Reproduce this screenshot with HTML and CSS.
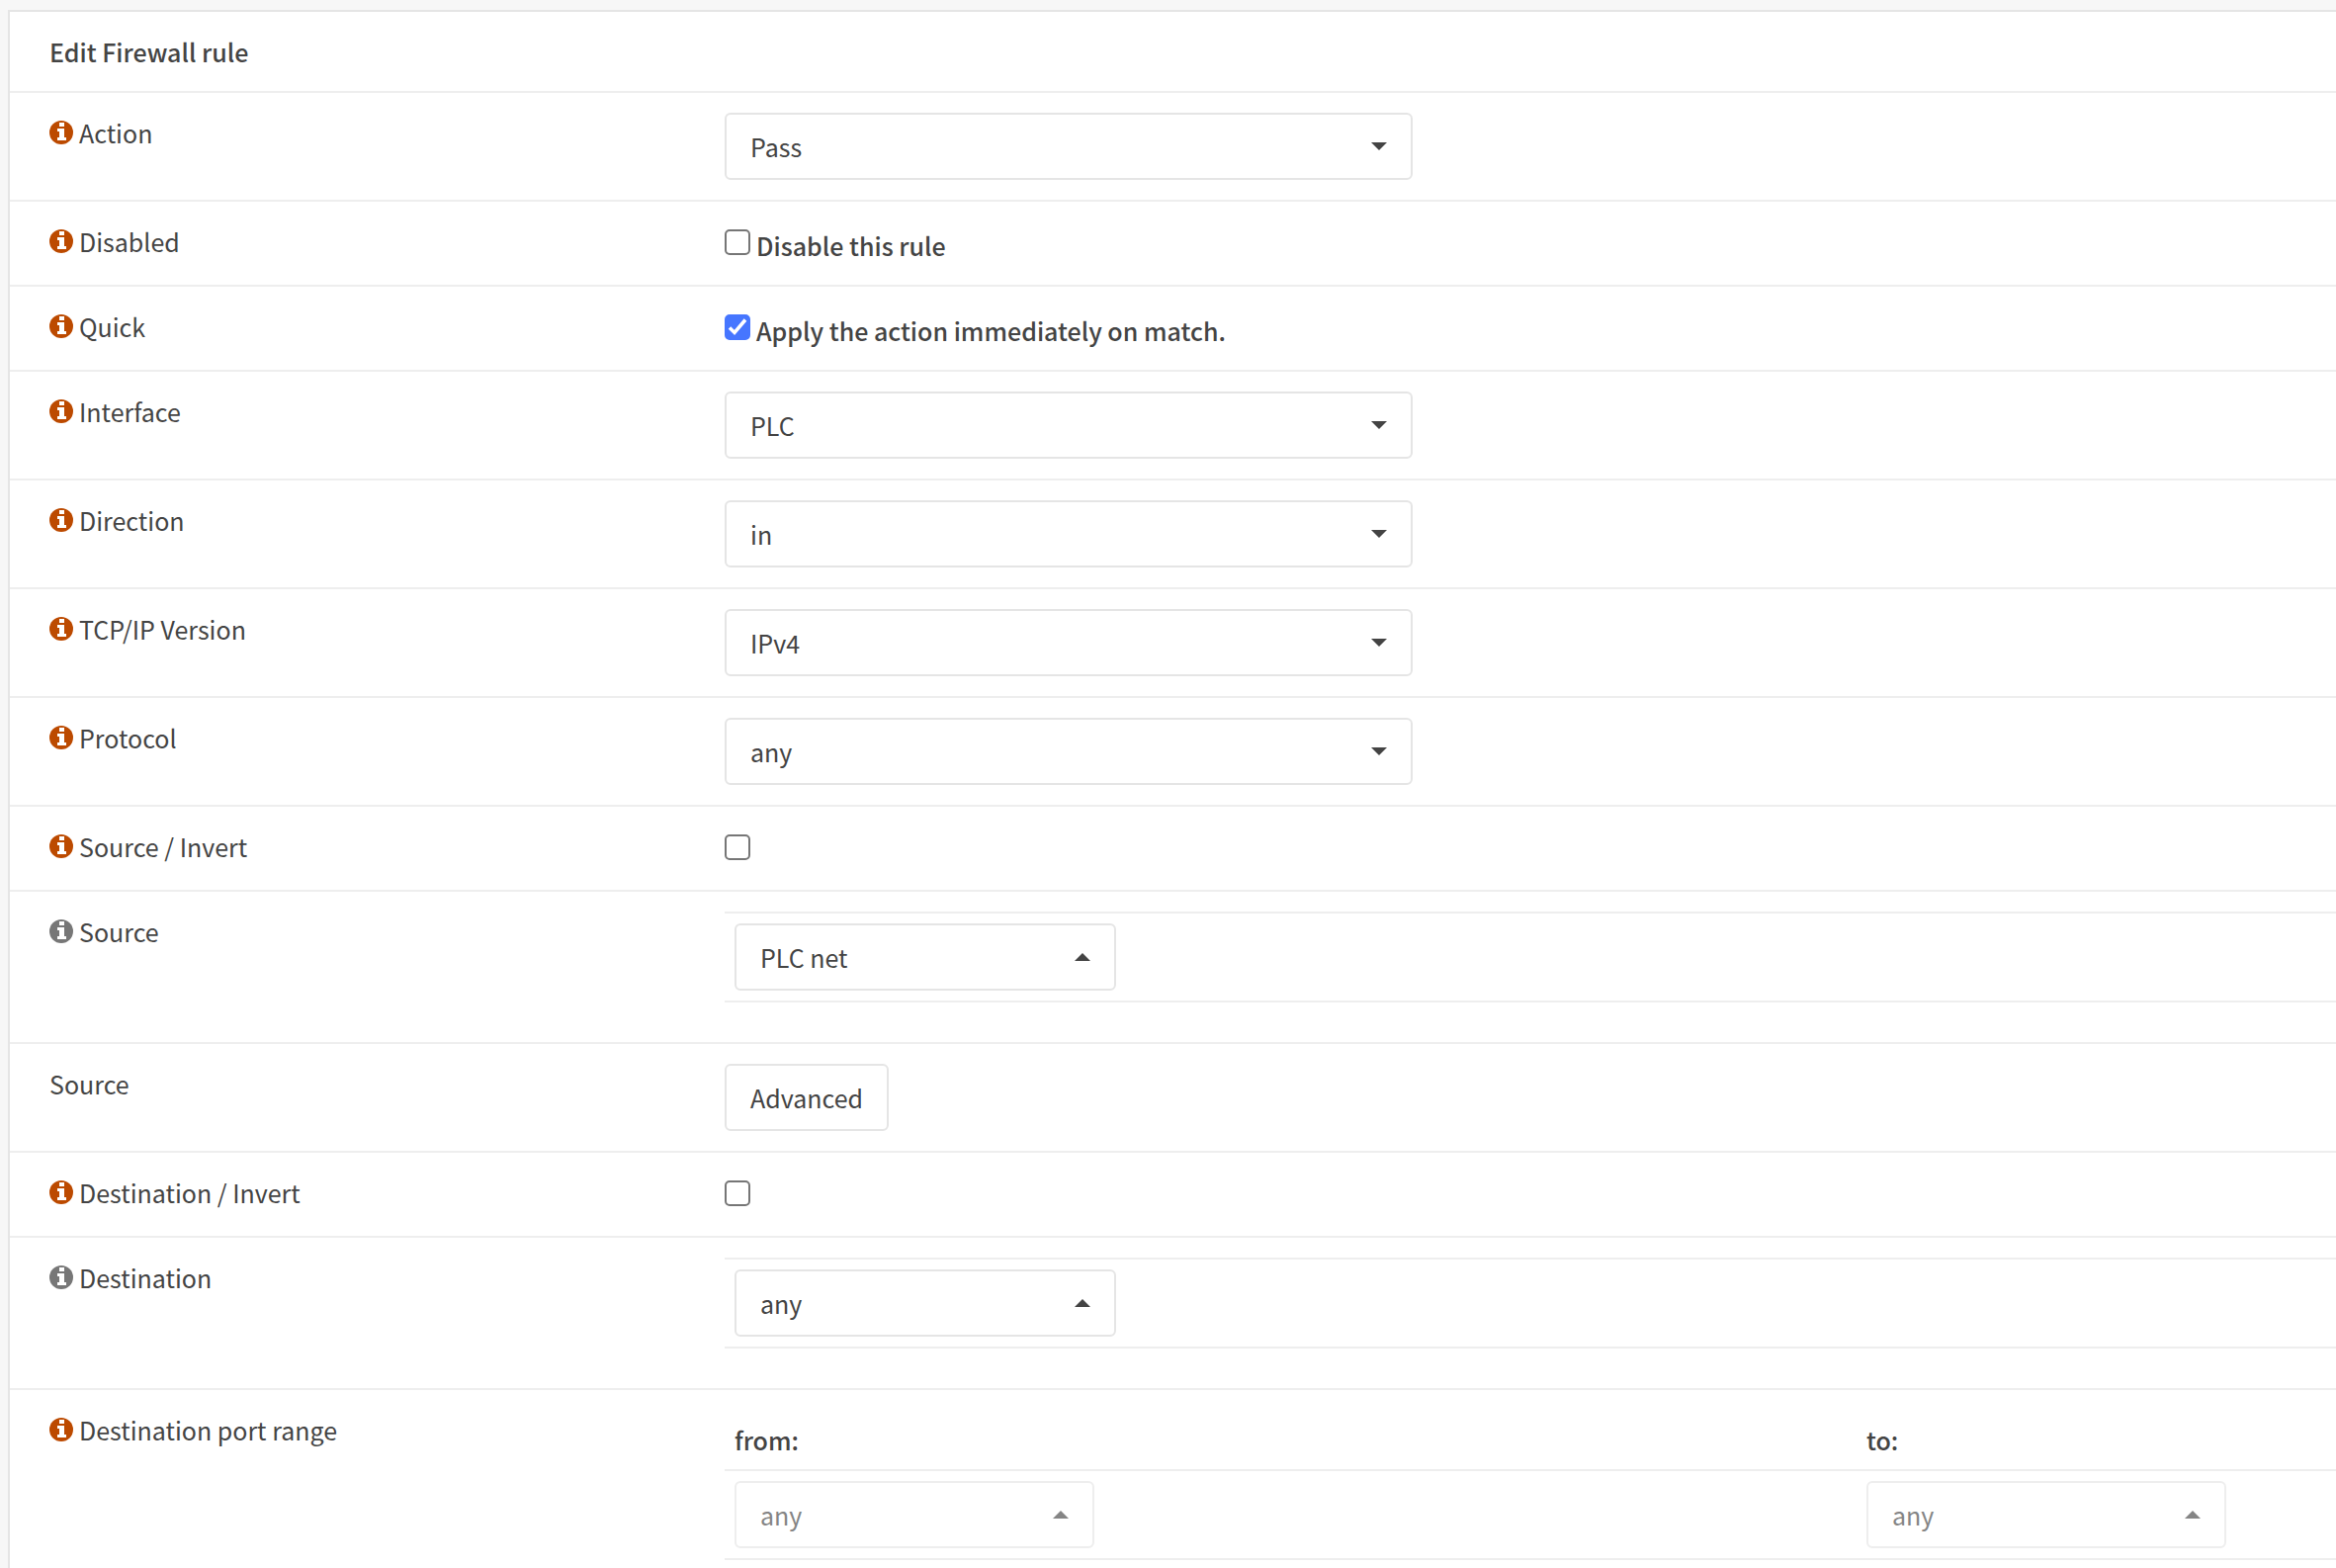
FILE: index.html
```
<!DOCTYPE html>
<html lang="en">
	<head>
		<meta charset="UTF-8">
		<title>Edit Firewall rule</title>
		<link rel="stylesheet" href="styles.css">
	</head>
	<body>
		<svg class="defs" width="0" height="0" aria-hidden="true">
			<symbol id="info" viewBox="0 0 24 24">
				<circle cx="12" cy="12" r="12"/>
				<path fill="#fff" d="M10 2h5v4h-5zM8 8h7v9h2v3H8v-3h2v-6H8z"/>
			</symbol>
		</svg>
		<form class="panel">
			<div class="row head"><h1>Edit Firewall rule</h1></div>
			<div class="row">
				<div class="name"><a href="#action" class="info"><svg><use href="#info"/></svg></a><label for="action">Action</label></div>
				<div class="field"><select id="action" class="wide"><option>Pass</option></select></div>
			</div>
			<div class="row">
				<div class="name"><a href="#disabled" class="info"><svg><use href="#info"/></svg></a>Disabled</div>
				<div class="field check"><input type="checkbox" id="disabled"><label for="disabled">Disable this rule</label></div>
			</div>
			<div class="row">
				<div class="name"><a href="#quick" class="info"><svg><use href="#info"/></svg></a>Quick</div>
				<div class="field check"><input type="checkbox" id="quick" checked><label for="quick">Apply the action immediately on match.</label></div>
			</div>
			<div class="row">
				<div class="name"><a href="#interface" class="info"><svg><use href="#info"/></svg></a><label for="interface">Interface</label></div>
				<div class="field"><select id="interface" class="wide"><option>PLC</option></select></div>
			</div>
			<div class="row">
				<div class="name"><a href="#direction" class="info"><svg><use href="#info"/></svg></a><label for="direction">Direction</label></div>
				<div class="field"><select id="direction" class="wide"><option>in</option></select></div>
			</div>
			<div class="row">
				<div class="name"><a href="#ipprotocol" class="info"><svg><use href="#info"/></svg></a><label for="ipprotocol">TCP/IP Version</label></div>
				<div class="field"><select id="ipprotocol" class="wide"><option>IPv4</option></select></div>
			</div>
			<div class="row">
				<div class="name"><a href="#protocol" class="info"><svg><use href="#info"/></svg></a><label for="protocol">Protocol</label></div>
				<div class="field"><select id="protocol" class="wide"><option>any</option></select></div>
			</div>
			<div class="row">
				<div class="name"><a href="#srcnot" class="info"><svg><use href="#info"/></svg></a><label for="srcnot">Source / Invert</label></div>
				<div class="field check"><input type="checkbox" id="srcnot"></div>
			</div>
			<div class="row">
				<div class="name"><span class="info muted"><svg><use href="#info"/></svg></span><label for="src">Source</label></div>
				<div class="field"><div class="inner"><select id="src" class="medium up"><option>PLC net</option></select></div></div>
			</div>
			<div class="row">
				<div class="name">Source</div>
				<div class="field"><button type="button">Advanced</button></div>
			</div>
			<div class="row">
				<div class="name"><a href="#dstnot" class="info"><svg><use href="#info"/></svg></a><label for="dstnot">Destination / Invert</label></div>
				<div class="field check"><input type="checkbox" id="dstnot"></div>
			</div>
			<div class="row">
				<div class="name"><span class="info muted"><svg><use href="#info"/></svg></span><label for="dst">Destination</label></div>
				<div class="field"><div class="inner"><select id="dst" class="medium up"><option>any</option></select></div></div>
			</div>
			<div class="row">
				<div class="name"><a href="#dstbeginport" class="info"><svg><use href="#info"/></svg></a>Destination port range</div>
				<div class="field">
					<div class="ports titles"><label for="dstbeginport">from:</label><label for="dstendport">to:</label></div>
					<div class="inner ports">
						<select id="dstbeginport" class="small up" disabled><option>any</option></select>
						<select id="dstendport" class="small up" disabled><option>any</option></select>
					</div>
				</div>
			</div>
		</form>
	</body>
</html>
```
FILE: styles.css
```
*{
	margin: 0;
	padding: 0;
	box-sizing: border-box;
}
html{overflow: hidden;}
body{
	padding: 10px 0 0 8px;
	background: #f7f7f7;
	color: #444;
	font-family: "Noto Sans CJK SC", "Noto Sans", sans-serif;
	font-size: 25px;
	line-height: 40px;
}
.defs{position: absolute;}

.panel{
	background: #fff;
	border: 2px solid #e5e5e5;
	border-right: 0;
}
.row{
	display: grid;
	grid-template-columns: minmax(300px, 683px) 1fr;
	padding: 20px 0 20px 40px;
	border-top: 2px solid #eee;
}
.head{border-top: 0;}
.head h1{
	font-size: 25px;
	font-weight: 500;
}

.name{
	display: flex;
	align-items: flex-start;
	gap: 6px;
}
.info{
	display: flex;
	padding-top: 8px;
	color: #bc4a00;
}
.info svg{
	width: 24px;
	height: 24px;
	fill: currentColor;
}
.muted{color: #777;}

select, button{
	display: block;
	height: 68px;
	padding: 0 24px;
	border: 2px solid #e5e5e5;
	border-radius: 6px;
	background-color: #fff;
	color: #444;
	font: inherit;
}
select{
	appearance: none;
	max-width: 100%;
	background-image: url("data:image/svg+xml,%3Csvg xmlns='http://www.w3.org/2000/svg' width='16' height='8'%3E%3Cpath fill='%23444' d='M0 0h16L8 8z'/%3E%3C/svg%3E");
	background-repeat: no-repeat;
	background-position: right 24px center;
}
select.up{
	background-image: url("data:image/svg+xml,%3Csvg xmlns='http://www.w3.org/2000/svg' width='16' height='8'%3E%3Cpath fill='%23444' d='M0 8h16L8 0z'/%3E%3C/svg%3E");
}
select:disabled{opacity: .65;}
.wide{width: 696px;}
.medium{width: 386px;}
.small{width: 364px;}

.check{
	display: flex;
	align-items: flex-start;
	gap: 6px;
	min-height: 44px;
}
.check label{
	padding-top: 4px;
	font-weight: 500;
}
input{
	appearance: none;
	width: 26px;
	height: 26px;
	margin-top: 8px;
	border: 2px solid #767676;
	border-radius: 5px;
	background: #fff;
}
input:checked{
	border-color: #4676ff;
	background: #4676ff url("data:image/svg+xml,%3Csvg xmlns='http://www.w3.org/2000/svg' viewBox='0 0 22 22'%3E%3Cpath fill='none' stroke='%23fff' stroke-width='3.5' d='M3 11.5l5 5L19 3.5'/%3E%3C/svg%3E") center / 22px no-repeat;
}

.inner{
	margin-bottom: 20px;
	padding: 10px;
	border: solid #eee;
	border-width: 2px 0;
}
.ports{
	display: grid;
	grid-template-columns: 1fr 465px;
}
.titles{
	padding: 10px;
	font-weight: 500;
}
```
